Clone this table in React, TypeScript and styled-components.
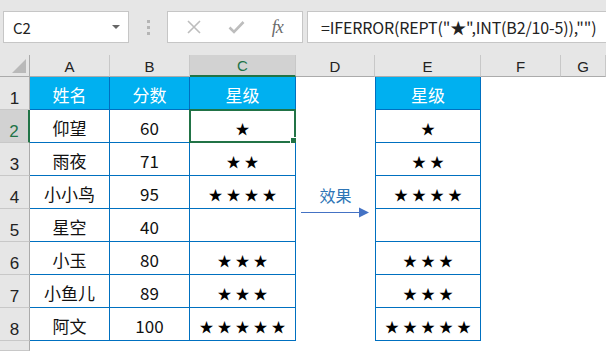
import styled, { createGlobalStyle } from 'styled-components';

const GlobalStyle = createGlobalStyle`
  html, body {
    margin: 0;
    padding: 0;
    background: #fff;
    overflow: hidden;
  }
  body {
    font-family: "Noto Sans CJK SC", "Noto Sans", sans-serif;
  }
`;

const BLUE = '#0070c0';
const GREEN = '#217346';

const S = {
  Window: styled.div`
    width: 606px;
    height: 351px;
    overflow: hidden;
    display: flex;
    flex-direction: column;
    background: #fff;
  `,
  Toolbar: styled.div`
    flex: none;
    height: 55px;
    box-sizing: border-box;
    padding: 11px 0 0 3px;
    background: #e6e6e6;
    display: flex;
    align-items: flex-start;
  `,
  NameBox: styled.div`
    width: 126px;
    height: 32px;
    box-sizing: border-box;
    background: #fff;
    border: 1px solid #c6c6c6;
    display: flex;
    align-items: center;
    justify-content: space-between;
    padding: 0 8px 0 9px;
    font-size: 15px;
    color: #222;
  `,
  Caret: styled.span`
    width: 0;
    height: 0;
    border-left: 4px solid transparent;
    border-right: 4px solid transparent;
    border-top: 4px solid #666;
  `,
  Grip: styled.div`
    width: 38px;
    height: 32px;
    display: flex;
    flex-direction: column;
    align-items: center;
    justify-content: center;
    gap: 3px;
    span {
      width: 3px;
      height: 3px;
      background: #b5b5b5;
    }
  `,
  ButtonBox: styled.div`
    width: 136px;
    height: 32px;
    box-sizing: border-box;
    background: #fff;
    border: 1px solid #c6c6c6;
    display: flex;
    align-items: center;
    justify-content: space-around;
    padding: 0 6px;
  `,
  Fx: styled.span`
    font-family: "Liberation Serif", "DejaVu Serif", serif;
    font-style: italic;
    font-size: 18px;
    color: #6b6b6b;
    letter-spacing: -1px;
  `,
  FormulaBox: styled.div`
    flex: 1;
    margin-left: 4px;
    height: 32px;
    box-sizing: border-box;
    background: #fff;
    border: 1px solid #c6c6c6;
    border-right: none;
    display: flex;
    align-items: center;
    padding-left: 13px;
    font-size: 16px;
    letter-spacing: -0.15px;
    color: #222;
    white-space: nowrap;
  `,
  Sheet: styled.div`
    position: relative;
    flex: 1;
    display: grid;
    grid-template-columns: 30px 80px 80px 106px 79px 106px 80px 1fr;
    grid-template-rows: 22px repeat(8, 33px) 1fr;
  `,
  Corner: styled.div`
    box-sizing: border-box;
    background: #e6e6e6;
    border-right: 1px solid #ababab;
    border-bottom: 1px solid #ababab;
    position: relative;
    &::after {
      content: '';
      position: absolute;
      right: 3px;
      bottom: 3px;
      border-left: 14px solid transparent;
      border-bottom: 14px solid #b9b9b9;
    }
  `,
  ColHead: styled.div<{ $sel?: boolean }>`
    box-sizing: border-box;
    background: ${({ $sel }) => ($sel ? '#d2d2d2' : '#e6e6e6')};
    border-right: 1px solid #c8c8c8;
    border-bottom: ${({ $sel }) => ($sel ? `2px solid ${GREEN}` : '1px solid #ababab')};
    display: flex;
    align-items: center;
    justify-content: center;
    font-family: "Liberation Sans", Arial, sans-serif;
    font-size: 15px;
    color: ${({ $sel }) => ($sel ? GREEN : '#222')};
    padding-top: 1px;
  `,
  RowHead: styled.div<{ $sel?: boolean }>`
    box-sizing: border-box;
    background: ${({ $sel }) => ($sel ? '#d2d2d2' : '#e6e6e6')};
    border-right: ${({ $sel }) => ($sel ? `2px solid ${GREEN}` : '1px solid #ababab')};
    border-bottom: 1px solid #c8c8c8;
    display: flex;
    align-items: flex-end;
    justify-content: center;
    padding-bottom: 0;
    font-family: "Liberation Sans", Arial, sans-serif;
    font-size: 17px;
    color: ${({ $sel }) => ($sel ? GREEN : '#222')};
  `,
  Cell: styled.div<{ $kind: 'head' | 'body' | 'blank'; $left?: boolean }>`
    position: relative;
    box-sizing: border-box;
    display: flex;
    align-items: center;
    justify-content: center;
    padding-top: 3px;
    font-size: 17px;
    white-space: nowrap;
    background: ${({ $kind }) => ($kind === 'head' ? '#00b0f0' : '#fff')};
    color: ${({ $kind }) => ($kind === 'head' ? '#fff' : '#111')};
    border-right: ${({ $kind }) => ($kind === 'blank' ? 'none' : `1px solid ${BLUE}`)};
    border-bottom: ${({ $kind }) => ($kind === 'blank' ? 'none' : `1px solid ${BLUE}`)};
    border-left: ${({ $left }) => ($left ? `1px solid ${BLUE}` : 'none')};
  `,
  Stars: styled.span`
    font-size: 14px;
    letter-spacing: 4px;
    padding-left: 4px;
    color: #000;
  `,
  Selection: styled.div`
    position: absolute;
    inset: -1px;
    border: 2px solid ${GREEN};
    pointer-events: none;
  `,
  FillHandle: styled.div`
    position: absolute;
    right: -3px;
    bottom: -3px;
    width: 5px;
    height: 5px;
    background: ${GREEN};
    border: 1px solid #fff;
  `,
  Note: styled.div`
    position: absolute;
    left: 301px;
    top: 130px;
    width: 68px;
    display: flex;
    flex-direction: column;
    align-items: center;
    gap: 2px;
  `,
  NoteLabel: styled.span`
    font-size: 16px;
    color: #2e75b6;
    line-height: 20px;
    padding-left: 1px;
  `,
};

const rows: [string, string, number][] = [
  ['仰望', '60', 1],
  ['雨夜', '71', 2],
  ['小小鸟', '95', 4],
  ['星空', '40', 0],
  ['小玉', '80', 3],
  ['小鱼儿', '89', 3],
  ['阿文', '100', 5],
];

const cols = ['A', 'B', 'C', 'D', 'E', 'F', 'G'];

const Cross = () => (
  <svg width="14" height="14" viewBox="0 0 14 14">
    <path d="M1 1 L13 13 M13 1 L1 13" stroke="#bdbdbd" strokeWidth="1.6" />
  </svg>
);

const Check = () => (
  <svg width="17" height="14" viewBox="0 0 17 14">
    <path d="M1.5 7.5 L6 12 L15.5 2" stroke="#bdbdbd" strokeWidth="2.6" fill="none" />
  </svg>
);

const Arrow = () => (
  <svg width="68" height="11" viewBox="0 0 68 11">
    <line x1="0" y1="5.5" x2="60" y2="5.5" stroke="#4472c4" strokeWidth="1.2" />
    <path d="M58 0.5 L68 5.5 L58 10.5 Z" fill="#4472c4" />
  </svg>
);

const stars = (n: number) => '★'.repeat(n);

export default function App() {
  return (
    <S.Window>
      <GlobalStyle />
      <S.Toolbar>
        <S.NameBox>
          C2
          <S.Caret />
        </S.NameBox>
        <S.Grip>
          <span />
          <span />
          <span />
        </S.Grip>
        <S.ButtonBox>
          <Cross />
          <Check />
          <S.Fx>fx</S.Fx>
        </S.ButtonBox>
        <S.FormulaBox>=IFERROR(REPT("★",INT(B2/10-5)),"")</S.FormulaBox>
      </S.Toolbar>

      <S.Sheet>
        <S.Corner />
        {cols.map((c) => (
          <S.ColHead key={c} $sel={c === 'C'}>
            {c}
          </S.ColHead>
        ))}

        <S.RowHead>1</S.RowHead>
        <S.Cell $kind="head">姓名</S.Cell>
        <S.Cell $kind="head">分数</S.Cell>
        <S.Cell $kind="head">星级</S.Cell>
        <S.Cell $kind="blank" />
        <S.Cell $kind="head" $left>
          星级
        </S.Cell>
        <S.Cell $kind="blank" />
        <S.Cell $kind="blank" />

        {rows.map(([name, score, n], i) => (
          <>
            <S.RowHead key={`r${i}`} $sel={i === 0}>
              {i + 2}
            </S.RowHead>
            <S.Cell key={`a${i}`} $kind="body">
              {name}
            </S.Cell>
            <S.Cell key={`b${i}`} $kind="body">
              {score}
            </S.Cell>
            <S.Cell key={`c${i}`} $kind="body">
              <S.Stars>{stars(n)}</S.Stars>
              {i === 0 && (
                <S.Selection>
                  <S.FillHandle />
                </S.Selection>
              )}
            </S.Cell>
            <S.Cell key={`d${i}`} $kind="blank" />
            <S.Cell key={`e${i}`} $kind="body" $left>
              <S.Stars>{stars(n)}</S.Stars>
            </S.Cell>
            <S.Cell key={`f${i}`} $kind="blank" />
            <S.Cell key={`g${i}`} $kind="blank" />
          </>
        ))}

        <S.RowHead />

        <S.Note>
          <S.NoteLabel>效果</S.NoteLabel>
          <Arrow />
        </S.Note>
      </S.Sheet>
    </S.Window>
  );
}
